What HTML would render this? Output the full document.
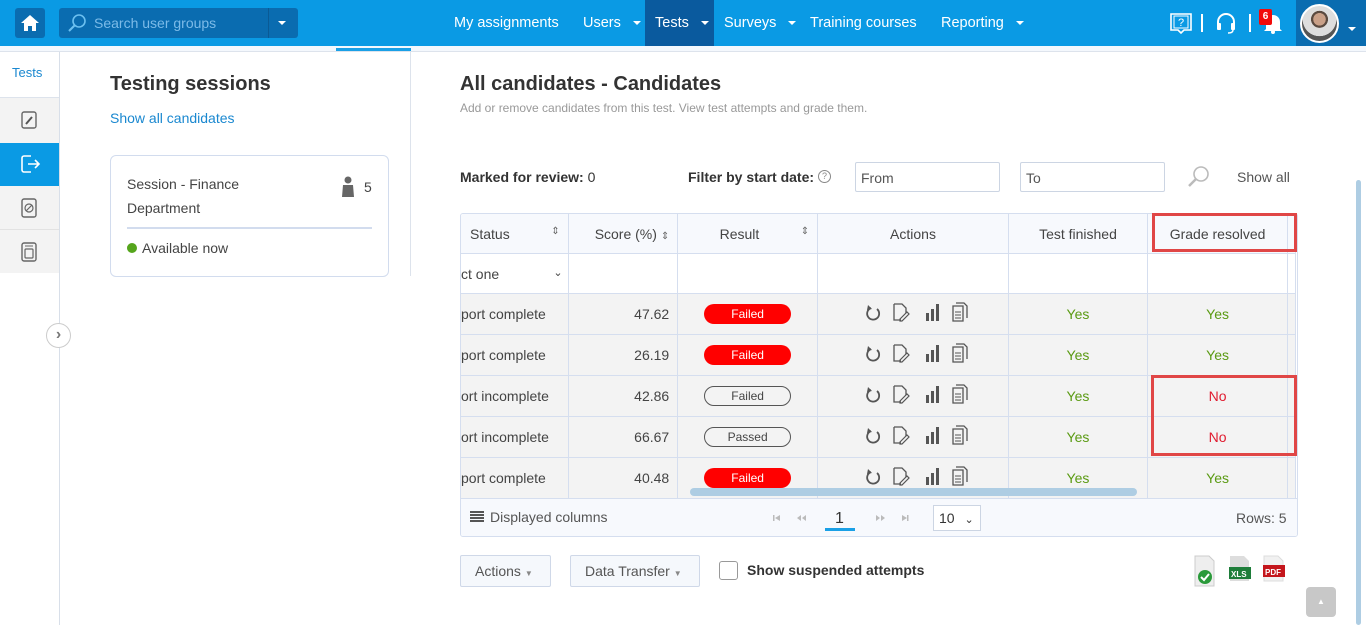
<!DOCTYPE html>
<html><head><meta charset="utf-8"><style>
*{box-sizing:border-box;margin:0;padding:0}
body{width:1366px;height:625px;overflow:hidden;background:#fff;font-family:"Liberation Sans",sans-serif;color:#333;position:relative}
.a{position:absolute}
.nav{left:0;top:0;width:1366px;height:46px;background:#0a9ae4}
.navt{color:#fff;font-size:14.5px;top:15px}
.caret{display:inline-block;border-left:4px solid transparent;border-right:4px solid transparent;border-top:4px solid #fff;vertical-align:middle;margin-left:8px}
.tbl{border-collapse:collapse;table-layout:fixed}
.grid td{border:1px solid #d5deef;font-size:14px;color:#444}
.sort{float:right;color:#666;font-size:10px;margin-right:8px}
.failed{display:inline-block;width:87px;height:20px;border-radius:10px;background:#f00;color:#fff;font-size:12px;line-height:20px;text-align:center}
.out{display:inline-block;width:87px;height:20px;border-radius:10px;border:1px solid #555;color:#444;font-size:12px;line-height:18px;text-align:center}
.grid td.yes{color:#5a9a12}.grid td.no{color:#e01b2f}
</style></head><body>
<div class="a nav"></div>
<div class="a" style="left:15px;top:8px;width:30px;height:30px;background:#0a6cb0;border-radius:3px"></div>
<svg class="a" style="left:20px;top:13px" width="20" height="20" viewBox="0 0 20 20"><path d="M10 2L1 10h3v8h4v-5h4v5h4v-8h3z" fill="#fff"/></svg>
<div class="a" style="left:59px;top:8px;width:239px;height:30px;background:#0a6cb0;border-radius:3px"></div>
<div class="a" style="left:268px;top:8px;width:1px;height:30px;background:#0a5a95"></div>
<svg class="a" style="left:66px;top:12px" width="22" height="22" viewBox="0 0 22 22"><circle cx="13" cy="9" r="6" fill="none" stroke="#6cc0f0" stroke-width="1.6"/><path d="M9 13L3 19" stroke="#6cc0f0" stroke-width="2"/></svg>
<div class="a" style="left:94px;top:15px;font-size:14px;color:#7cbbe8">Search user groups</div>
<div class="a" style="left:278px;top:14px"><span class="caret" style="margin:0"></span></div>
<div class="a" style="left:645px;top:0;width:69px;height:46px;background:#0a5a9e"></div>
<div class="a navt" style="left:454px">My assignments</div>
<div class="a navt" style="left:583px">Users<span class="caret" style="margin-left:12px"></span></div>
<div class="a navt" style="left:655px">Tests<span class="caret" style="margin-left:12px"></span></div>
<div class="a navt" style="left:724px">Surveys<span class="caret" style="margin-left:12px"></span></div>
<div class="a navt" style="left:810px">Training courses</div>
<div class="a navt" style="left:941px">Reporting<span class="caret" style="margin-left:12px"></span></div>
<svg class="a" style="left:1168px;top:11px" width="26" height="24" viewBox="0 0 26 24"><path d="M3 3h20v16h-7l-3 3-3-3H3z" fill="none" stroke="#fff" stroke-width="1.6"/><path d="M6 5h14v12H6z" fill="none" stroke="#fff" stroke-width="1"/><text x="10" y="15" font-size="11" fill="#fff" font-family="Liberation Sans">?</text></svg>
<div class="a" style="left:1201px;top:14px;width:2px;height:18px;background:#fff"></div>
<svg class="a" style="left:1214px;top:11px" width="24" height="24" viewBox="0 0 24 24"><path d="M4 14V11a8 8 0 0116 0v3" fill="none" stroke="#fff" stroke-width="2"/><rect x="3" y="12" width="4" height="7" rx="1" fill="#fff"/><rect x="17" y="12" width="4" height="7" rx="1" fill="#fff"/><path d="M19 19q0 3-5 3" stroke="#fff" stroke-width="1.5" fill="none"/></svg>
<div class="a" style="left:1249px;top:14px;width:2px;height:18px;background:#fff"></div>
<svg class="a" style="left:1262px;top:11px" width="22" height="24" viewBox="0 0 22 24"><path d="M4 18V11a7 7 0 0114 0v7l2 2H2z" fill="#fff"/><circle cx="11" cy="21" r="2" fill="#fff"/></svg>
<div class="a" style="left:1259px;top:9px;width:13px;height:16px;background:#f20a0a;color:#fff;font-size:10px;font-weight:bold;text-align:center;line-height:16px;border-radius:2px">6</div>
<div class="a" style="left:1296px;top:0;width:70px;height:46px;background:#0a6cb0"></div>
<div class="a" style="left:1300px;top:4px;width:39px;height:39px;border-radius:50%;border:2px solid #fff;background:radial-gradient(circle at 50% 38%,#c9a088 0 22%,#5a4a40 23% 30%,#ddd 31% 60%,#555 61%)"></div>
<div class="a" style="left:1348px;top:20px"><span class="caret" style="margin:0"></span></div>

<div class="a" style="left:0;top:46px;width:1366px;height:6px;background:#f4f8fd;border-bottom:1px solid #dde3ec"></div>
<div class="a" style="left:336px;top:48px;width:75px;height:3px;background:#1aa0e6"></div>
<div class="a" style="left:59px;top:52px;width:1px;height:573px;background:#d8dfe9"></div>
<div class="a" style="left:0;top:97px;width:59px;height:176px;background:#f3f3f3"></div>
<div class="a" style="left:12px;top:65px;font-size:13px;color:#1a88d0">Tests</div>
<div class="a" style="left:0;top:97px;width:59px;height:1px;background:#dde3ec"></div>
<div class="a" style="left:0;top:143px;width:59px;height:43px;background:#0a9ae4"></div>
<div class="a" style="left:0;top:229px;width:59px;height:1px;background:#e2e2e2"></div>
<svg class="a" style="left:19px;top:110px" width="20" height="20" viewBox="0 0 20 20"><rect x="3" y="2" width="14" height="16" rx="2" fill="none" stroke="#666" stroke-width="1.4"/><path d="M7 14l6-7" stroke="#555" stroke-width="2"/></svg>
<svg class="a" style="left:19px;top:153px" width="24" height="22" viewBox="0 0 24 22"><path d="M12 3H5a2 2 0 00-2 2v12a2 2 0 002 2h7" fill="none" stroke="#fff" stroke-width="1.6"/><path d="M9 11h11M16 7l4 4-4 4" fill="none" stroke="#fff" stroke-width="1.6"/></svg>
<svg class="a" style="left:19px;top:197px" width="20" height="22" viewBox="0 0 20 22"><rect x="3" y="2" width="14" height="18" rx="2" fill="none" stroke="#666" stroke-width="1.4"/><circle cx="10" cy="11" r="4" fill="none" stroke="#666" stroke-width="1.2"/><path d="M7 14l6-6" stroke="#666" stroke-width="1.2"/></svg>
<svg class="a" style="left:19px;top:241px" width="20" height="22" viewBox="0 0 20 22"><rect x="3" y="2" width="14" height="18" rx="2" fill="none" stroke="#666" stroke-width="1.4"/><rect x="6" y="8" width="8" height="9" rx="1" fill="none" stroke="#666" stroke-width="1.2"/><path d="M6 5h8" stroke="#666"/></svg>
<div class="a" style="left:46px;top:323px;width:25px;height:25px;border-radius:50%;border:1px solid #ccc;background:#fff;color:#777;font-size:16px;font-weight:bold;text-align:center;line-height:22px">›</div>

<div class="a" style="left:410px;top:52px;width:1px;height:224px;background:#dde3ec"></div>
<div class="a" style="left:110px;top:73px;font-size:20px;font-weight:bold;color:#333">Testing sessions</div>
<div class="a" style="left:110px;top:110px;font-size:14px;color:#1a88d0">Show all candidates</div>
<div class="a" style="left:110px;top:155px;width:279px;height:122px;border:1px solid #d2dcee;border-radius:6px"></div>
<div class="a" style="left:127px;top:172px;font-size:14px;line-height:24px;color:#444">Session - Finance<br>Department</div>
<svg class="a" style="left:341px;top:176px" width="14" height="22" viewBox="0 0 14 22"><circle cx="7" cy="4" r="3.5" fill="#666"/><path d="M2 9h10l1 12H1z" fill="#666"/></svg>
<div class="a" style="left:364px;top:179px;font-size:14px;color:#444">5</div>
<div class="a" style="left:127px;top:227px;width:245px;height:2px;background:#d2dcee"></div>
<div class="a" style="left:127px;top:243px;width:10px;height:10px;border-radius:50%;background:#55a51c"></div>
<div class="a" style="left:142px;top:240px;font-size:14px;color:#444">Available now</div>

<div class="a" style="left:460px;top:73px;font-size:20px;font-weight:bold;color:#333">All candidates - Candidates</div>
<div class="a" style="left:460px;top:101px;font-size:12px;color:#999">Add or remove candidates from this test. View test attempts and grade them.</div>
<div class="a" style="left:460px;top:169px;font-size:14px;color:#333"><b>Marked for review:</b> 0</div>
<div class="a" style="left:688px;top:169px;font-size:14px;color:#333"><b>Filter by start date:</b></div>
<div class="a" style="left:818px;top:170px;width:13px;height:13px;border-radius:50%;border:1px solid #888;font-size:9px;text-align:center;line-height:11px;color:#888">?</div>
<div class="a" style="left:855px;top:162px;width:145px;height:30px;border:1px solid #ccd5e3;border-radius:2px;font-size:14px;color:#555;padding:7px 5px">From</div>
<div class="a" style="left:1020px;top:162px;width:145px;height:30px;border:1px solid #ccd5e3;border-radius:2px;font-size:14px;color:#555;padding:7px 5px">To</div>
<svg class="a" style="left:1186px;top:164px" width="26" height="26" viewBox="0 0 26 26"><circle cx="15" cy="10" r="7" fill="none" stroke="#bbb" stroke-width="1.6"/><path d="M10 15L3 22" stroke="#bbb" stroke-width="2.5"/></svg>
<div class="a" style="left:1237px;top:169px;font-size:14px;color:#555">Show all</div>

<div class="a" style="left:460px;top:213px;width:838px;height:324px;border:1px solid #d5deef;border-radius:3px;overflow:hidden">
<table class="tbl grid" style="position:absolute;left:-1px;top:-1px">
<colgroup><col style="width:108px"><col style="width:111px"><col style="width:141px"><col style="width:194px"><col style="width:141px"><col style="width:142px"><col style="width:8px"></colgroup>
<tr style="height:40px;background:#f7f9fd"><td style="padding-left:9px">Status<span class="sort">⇕</span></td><td style="text-align:right;padding-right:8px">Score (%) <span style="font-size:10px;color:#666">⇕</span></td><td style="text-align:center">Result<span class="sort">⇕</span></td><td style="text-align:center">Actions</td><td style="text-align:center">Test finished</td><td style="text-align:center">Grade resolved</td><td></td></tr>
<tr style="height:40px"><td style="white-space:nowrap;overflow:hidden">ct one <span style="float:right;margin-right:5px;font-size:11px">⌄</span></td><td></td><td></td><td></td><td></td><td></td><td></td></tr>
<tr style="height:41px;background:#f3f3f3"><td style="white-space:nowrap;overflow:hidden">port complete</td><td style="text-align:right;padding-right:8px">47.62</td><td style="text-align:center"><span class="failed">Failed</span></td><td></td><td style="text-align:center" class="yes">Yes</td><td style="text-align:center" class="yes">Yes</td><td></td></tr>
<tr style="height:41px;background:#f3f3f3"><td style="white-space:nowrap;overflow:hidden">port complete</td><td style="text-align:right;padding-right:8px">26.19</td><td style="text-align:center"><span class="failed">Failed</span></td><td></td><td style="text-align:center" class="yes">Yes</td><td style="text-align:center" class="yes">Yes</td><td></td></tr>
<tr style="height:41px;background:#f3f3f3"><td style="white-space:nowrap;overflow:hidden">ort incomplete</td><td style="text-align:right;padding-right:8px">42.86</td><td style="text-align:center"><span class="out">Failed</span></td><td></td><td style="text-align:center" class="yes">Yes</td><td style="text-align:center" class="no">No</td><td></td></tr>
<tr style="height:41px;background:#f3f3f3"><td style="white-space:nowrap;overflow:hidden">ort incomplete</td><td style="text-align:right;padding-right:8px">66.67</td><td style="text-align:center"><span class="out">Passed</span></td><td></td><td style="text-align:center" class="yes">Yes</td><td style="text-align:center" class="no">No</td><td></td></tr>
<tr style="height:41px;background:#f3f3f3"><td style="white-space:nowrap;overflow:hidden">port complete</td><td style="text-align:right;padding-right:8px">40.48</td><td style="text-align:center"><span class="failed">Failed</span></td><td></td><td style="text-align:center" class="yes">Yes</td><td style="text-align:center" class="yes">Yes</td><td></td></tr>
</table>
<svg class="a" style="left:404px;top:86px" width="110" height="200" viewBox="0 0 110 200">
<defs><g id="ic">
<path d="M6 6a6 6 0 106 1" fill="none" stroke="#555" stroke-width="1.8"/><path d="M3 3l4 4-5 1z" fill="#555"/>
<path d="M29 2h8l4 4v5M29 2v16h7" fill="none" stroke="#555" stroke-width="1.3"/><path d="M35 17l7-7 2 2-7 7h-2z" fill="none" stroke="#555" stroke-width="1.2"/>
<rect x="61" y="11" width="3" height="8" fill="#555"/><rect x="66" y="7" width="3" height="12" fill="#555"/><rect x="71" y="2" width="3" height="17" fill="#555"/>
<path d="M91 1h8l3 3v12M88 4h10v15H88z" fill="none" stroke="#555" stroke-width="1.3"/><path d="M90 10h6M90 13h6M90 16h6" stroke="#555"/>
</g></defs>
<use href="#ic" y="2"/><use href="#ic" y="43"/><use href="#ic" y="84"/><use href="#ic" y="125"/><use href="#ic" y="166"/>
</svg>
<div class="a" style="left:229px;top:274px;width:447px;height:8px;border-radius:4px;background:#aecde3"></div>
<div class="a" style="left:0;top:284px;width:838px;height:40px;background:#f7f9fd;border-top:1px solid #d5deef"></div>
</div>
<div class="a" style="left:1152px;top:213px;width:145px;height:39px;border:3px solid #e04646"></div>
<div class="a" style="left:1151px;top:375px;width:146px;height:81px;border:3px solid #e04646"></div>
<svg class="a" style="left:470px;top:511px" width="14" height="12"><path d="M0 1h14M0 4h14M0 7h14M0 10h14" stroke="#555" stroke-width="2"/></svg>
<div class="a" style="left:490px;top:509px;font-size:14px;color:#555">Displayed columns</div>
<svg class="a" style="left:770px;top:513px" width="140" height="10" viewBox="0 0 140 10">
<g fill="#bbb"><rect x="3" y="2" width="1.5" height="6"/><path d="M10 2v6L5 5z"/><path d="M31 2v6l-4-3zM36 2v6l-4-3z"/>
<path d="M106 2v6l4-3zM111 2v6l4-3z"/><path d="M132 2v6l5-3z"/><rect x="137" y="2" width="1.5" height="6"/></g></svg>
<div class="a" style="left:835px;top:510px;font-size:16px;color:#333">1</div>
<div class="a" style="left:825px;top:528px;width:30px;height:3px;background:#1aa0e6"></div>
<div class="a" style="left:933px;top:505px;width:48px;height:26px;border:1px solid #ccd5e3;background:#fff;font-size:14px;color:#333;padding:4px 5px">10 <span style="font-size:11px;margin-left:6px">⌄</span></div>
<div class="a" style="left:1236px;top:510px;font-size:14px;color:#555">Rows: 5</div>
<div class="a" style="left:460px;top:555px;width:91px;height:32px;border:1px solid #cfd8e8;border-radius:2px;background:#f5f8fc;font-size:14px;color:#555;padding:7px 14px">Actions <span style="font-size:8px;color:#888">▼</span></div>
<div class="a" style="left:570px;top:555px;width:130px;height:32px;border:1px solid #cfd8e8;border-radius:2px;background:#f5f8fc;font-size:14px;color:#555;padding:7px 14px">Data Transfer <span style="font-size:8px;color:#888">▼</span></div>
<div class="a" style="left:719px;top:561px;width:19px;height:19px;border:1px solid #999;border-radius:3px"></div>
<div class="a" style="left:747px;top:562px;font-size:14px;font-weight:bold;color:#333">Show suspended attempts</div>
<svg class="a" style="left:1192px;top:555px" width="100" height="32" viewBox="0 0 100 32">
<path d="M3 1h14l5 5v25H3z" fill="#eee" stroke="#ccc"/><circle cx="13" cy="22" r="7" fill="#2a9a3a"/><path d="M9 22l3 3 5-6" stroke="#fff" stroke-width="2" fill="none"/>
<path d="M38 1h14l5 5v20H38z" fill="#ddd"/><rect x="37" y="12" width="22" height="12" fill="#1e7d3a"/><text x="39" y="22" font-size="8" fill="#fff" font-family="Liberation Sans" font-weight="bold">XLS</text>
<path d="M72 1h14l5 5v20H72z" fill="#f1f1f1" stroke="#ddd"/><rect x="71" y="10" width="22" height="12" fill="#c4161c"/><text x="73" y="20" font-size="8" fill="#fff" font-family="Liberation Sans" font-weight="bold">PDF</text>
</svg>
<div class="a" style="left:1306px;top:587px;width:30px;height:30px;border-radius:4px;background:#c8c8c8;color:#fff;font-size:8px;text-align:center;line-height:30px">▲</div>
<div class="a" style="left:1356px;top:180px;width:5px;height:445px;border-radius:3px;background:#aecde3"></div>
</body></html>
